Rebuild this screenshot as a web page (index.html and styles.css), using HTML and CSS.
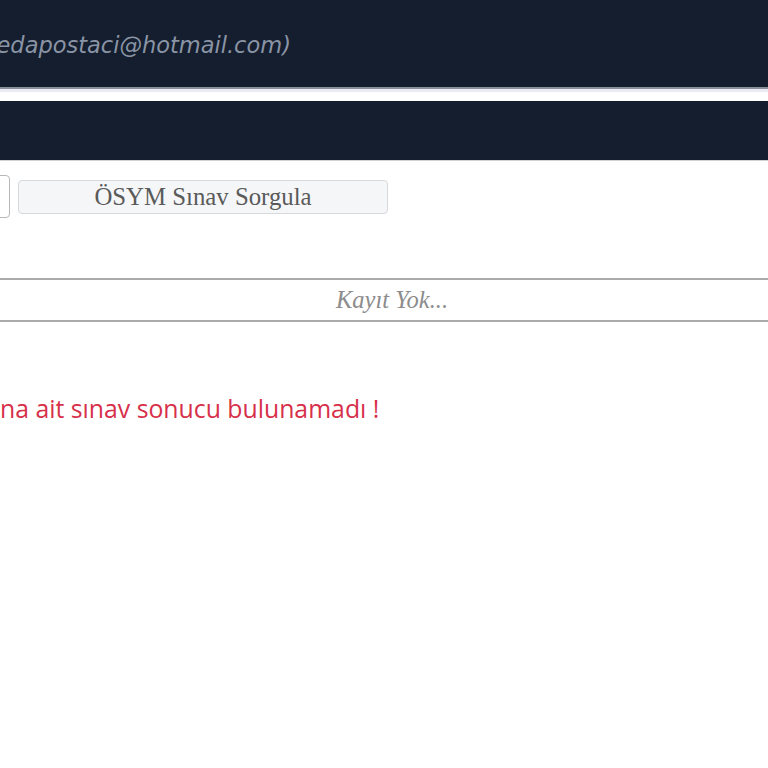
FILE: index.html
```html
<!DOCTYPE html>
<html lang="tr">
<head>
<meta charset="utf-8">
<link rel="stylesheet" href="styles.css">
</head>
<body>
<header class="topbar">
  <span class="user-email">(sedapostaci@hotmail.com)</span>
</header>
<div class="spacer"></div>
<nav class="navbar"></nav>
<section class="query-row">
  <div class="select-box"></div>
  <button class="query-btn" type="button">ÖSYM Sınav Sorgula</button>
</section>
<table class="result-table">
  <tr><td>Kayıt Yok...</td></tr>
</table>
<p class="error-msg">na ait sınav sonucu bulunamadı !</p>
</body>
</html>
```
FILE: styles.css
```css
html, body {
  margin: 0;
  padding: 0;
  background: #fff;
  overflow: hidden;
}
body {
  width: 768px;
  height: 768px;
}
.topbar {
  height: 87px;
  background: #141e2e;
  border-bottom: 2px solid #8a909a;
  display: flex;
  align-items: center;
  overflow: hidden;
}
.user-email {
  font-family: "DejaVu Sans", sans-serif;
  font-style: italic;
  font-size: 22.5px;
  color: #8a94a5;
  margin-left: -24px;
  white-space: nowrap;
  padding-top: 2px;
}
.spacer {
  height: 9px;
  border-top: 3px solid #ebebf3;
  background: #fff;
}
.navbar {
  height: 59px;
  background: #141e2e;
  border-bottom: 1px solid #d0d2d6;
}
.query-row {
  display: flex;
  align-items: center;
  gap: 8px;
  margin-top: 14px;
  height: 43px;
}
.select-box {
  width: 40px;
  margin-left: -32px;
  height: 41px;
  border: 1px solid #b8b8b8;
  border-radius: 4px;
  background: #fff;
}
.query-btn {
  width: 370px;
  height: 34px;
  background: #f5f6f8;
  border: 1px solid #d8d9dc;
  border-radius: 4px;
  font-family: "Liberation Serif", serif;
  font-size: 24.8px;
  color: #5a5a5a;
  padding: 0;
  line-height: 32px;
}
.result-table {
  width: 100%;
  border-collapse: collapse;
  margin-top: 60px;
}
.result-table td {
  border-top: 2px solid #aaa;
  border-bottom: 2px solid #aaa;
  height: 40px;
  padding: 0;
  padding-left: 16px;
  text-align: center;
  font-family: "Liberation Serif", serif;
  font-style: italic;
  font-size: 24.5px;
  color: #8c8c8c;
}
.error-msg {
  margin: 70px 0 0 0;
  font-family: "Open Sans", sans-serif;
  font-size: 24.8px;
  color: #d7304a;
  line-height: 32px;
}
```
